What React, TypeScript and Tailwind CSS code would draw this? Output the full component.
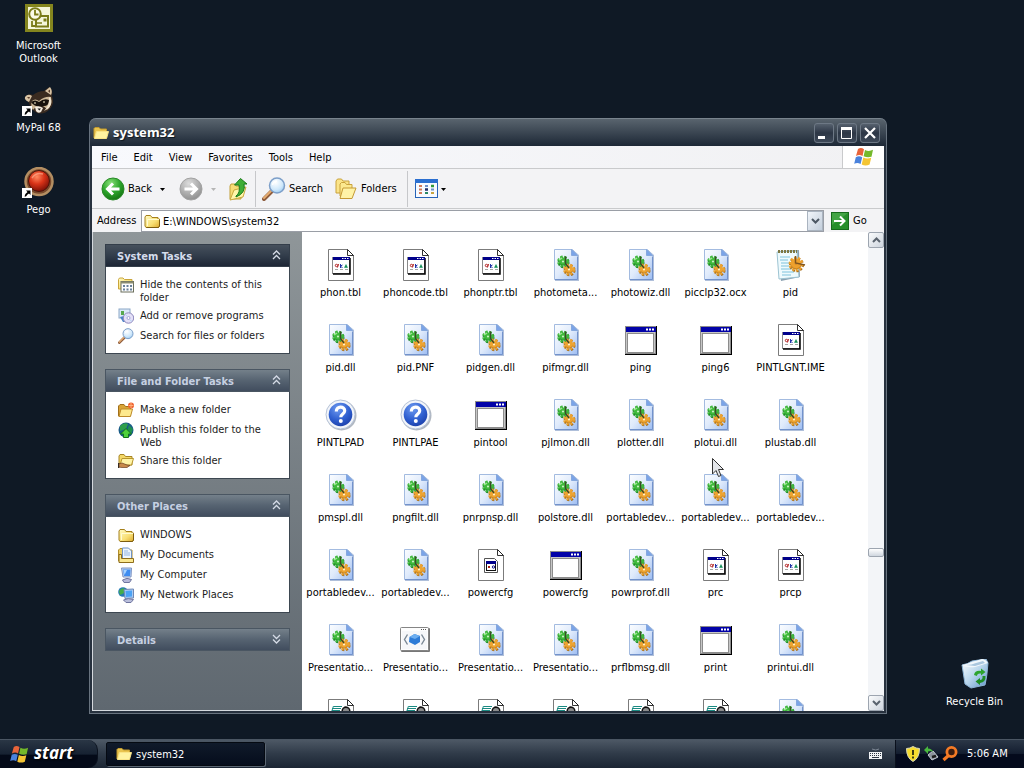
import React from "react";

type Kind = "tbl" | "dll" | "setup" | "window" | "help" | "cpl" | "xml" | "script";
type FileEntry = { name?: string; kind: Kind };

const files: FileEntry[] = [
  { name: "phon.tbl", kind: "tbl" },
  { name: "phoncode.tbl", kind: "tbl" },
  { name: "phonptr.tbl", kind: "tbl" },
  { name: "photometa...", kind: "dll" },
  { name: "photowiz.dll", kind: "dll" },
  { name: "picclp32.ocx", kind: "dll" },
  { name: "pid", kind: "setup" },
  { name: "pid.dll", kind: "dll" },
  { name: "pid.PNF", kind: "dll" },
  { name: "pidgen.dll", kind: "dll" },
  { name: "pifmgr.dll", kind: "dll" },
  { name: "ping", kind: "window" },
  { name: "ping6", kind: "window" },
  { name: "PINTLGNT.IME", kind: "tbl" },
  { name: "PINTLPAD", kind: "help" },
  { name: "PINTLPAE", kind: "help" },
  { name: "pintool", kind: "window" },
  { name: "pjlmon.dll", kind: "dll" },
  { name: "plotter.dll", kind: "dll" },
  { name: "plotui.dll", kind: "dll" },
  { name: "plustab.dll", kind: "dll" },
  { name: "pmspl.dll", kind: "dll" },
  { name: "pngfilt.dll", kind: "dll" },
  { name: "pnrpnsp.dll", kind: "dll" },
  { name: "polstore.dll", kind: "dll" },
  { name: "portabledev...", kind: "dll" },
  { name: "portabledev...", kind: "dll" },
  { name: "portabledev...", kind: "dll" },
  { name: "portabledev...", kind: "dll" },
  { name: "portabledev...", kind: "dll" },
  { name: "powercfg", kind: "cpl" },
  { name: "powercfg", kind: "window" },
  { name: "powrprof.dll", kind: "dll" },
  { name: "prc", kind: "tbl" },
  { name: "prcp", kind: "tbl" },
  { name: "Presentatio...", kind: "dll" },
  { name: "Presentatio...", kind: "xml" },
  { name: "Presentatio...", kind: "dll" },
  { name: "Presentatio...", kind: "dll" },
  { name: "prflbmsg.dll", kind: "dll" },
  { name: "print", kind: "window" },
  { name: "printui.dll", kind: "dll" },
  { kind: "script" },
  { kind: "script" },
  { kind: "script" },
  { kind: "script" },
  { kind: "script" },
  { kind: "script" },
  { kind: "dll" },
];

function Defs() {
  return (
    <svg width="0" height="0" className="absolute" aria-hidden="true">
      <defs>
        <linearGradient id="page" x1="0" y1="0" x2="1" y2="1">
          <stop offset="0" stopColor="#fbfdff" />
          <stop offset="0.5" stopColor="#dfeafb" />
          <stop offset="1" stopColor="#9dbdf2" />
        </linearGradient>
        <linearGradient id="folder" x1="0" y1="0" x2="1" y2="1">
          <stop offset="0" stopColor="#fffbc4" />
          <stop offset="0.6" stopColor="#f8df74" />
          <stop offset="1" stopColor="#dba92c" />
        </linearGradient>
        <radialGradient id="greenBall" cx="0.4" cy="0.25" r="0.8">
          <stop offset="0" stopColor="#8be07a" />
          <stop offset="0.5" stopColor="#2fa82d" />
          <stop offset="1" stopColor="#12700f" />
        </radialGradient>
        <radialGradient id="grayBall" cx="0.4" cy="0.25" r="0.8">
          <stop offset="0" stopColor="#dcdcdc" />
          <stop offset="0.6" stopColor="#ababab" />
          <stop offset="1" stopColor="#8c8c8c" />
        </radialGradient>
        <radialGradient id="blueBall" cx="0.4" cy="0.25" r="0.8">
          <stop offset="0" stopColor="#6f9bf0" />
          <stop offset="0.6" stopColor="#2f5fd0" />
          <stop offset="1" stopColor="#1c3fa8" />
        </radialGradient>
        <radialGradient id="redBall" cx="0.4" cy="0.3" r="0.7">
          <stop offset="0" stopColor="#ff8a60" />
          <stop offset="0.5" stopColor="#d93318" />
          <stop offset="1" stopColor="#7d1208" />
        </radialGradient>
        <radialGradient id="lens" cx="0.4" cy="0.3" r="0.8">
          <stop offset="0" stopColor="#ffffff" />
          <stop offset="0.6" stopColor="#cfe8fb" />
          <stop offset="1" stopColor="#8fc4ee" />
        </radialGradient>
        <linearGradient id="bin" x1="0" y1="0" x2="1" y2="1">
          <stop offset="0" stopColor="#ffffff" />
          <stop offset="0.5" stopColor="#b9d6ec" />
          <stop offset="1" stopColor="#5d93c8" />
        </linearGradient>
      </defs>
    </svg>
  );
}

function Gear({ x, y, r, fill, dark, hole }: { x: number; y: number; r: number; fill: string; dark: string; hole: string }) {
  return (
    <g>
      <circle cx={x + 0.6} cy={y + 0.8} r={r - 1.2} fill="none" stroke={dark} strokeWidth="2.400" strokeDasharray="2.2 1.600" />
      <circle cx={x} cy={y} r={r - 1.3} fill="none" stroke={fill} strokeWidth="2.400" strokeDasharray="2.200 1.600" />
      <circle cx={x} cy={y} r={r - 2} fill={fill} />
      <path d={`M${x - r + 2.5} ${y + 1.5}A${r - 2} ${r - 2} 0 0 0 ${x + r - 2.2} ${y + 1}`} fill="none" stroke={dark} strokeOpacity="0.6" />
      <circle cx={x} cy={y} r="1.100" fill={hole} />
    </g>
  );
}

function FileIcon({ kind }: { kind: Kind }) {
  let art: React.ReactNode = null;
  if (kind === "dll") {
    art = (
      <>
        <path d="M6 1H24L30 6V32H6Z" fill="#5f7fb5" fillOpacity="0.5" />
        <path d="M5.500 .5H23.500L28.500 5.500V30.500H5.500Z" fill="url(#page)" stroke="#a3bbe0" />
        <path d="M22.500 .5L28.500 6.500H22.500Z" fill="#7ba4e8" stroke="#86a8de" />
        <path d="M28.500 8V30.500H6" fill="none" stroke="#7292cc" />
        <Gear x={14} y={12.5} r={6} fill="#3fba3c" dark="#1b7d28" hole="#c9f0c2" />
        <Gear x={20} y={20.5} r={6} fill="#eea431" dark="#a8701e" hole="#fff0cc" />
        <path d="M16.500 7.500V14.500L20 19" stroke="#3b4a28" strokeWidth="1.400" fill="none" />
        <path d="M10 11L13 9" stroke="#9be88f" strokeWidth="1.500" />
      </>
    );
  } else if (kind === "tbl" || kind === "cpl" || kind === "script") {
    art = (
      <>
        <path d="M4.500 .5H23.500L29.500 6.500V31.500H4.500Z" fill="#fff" stroke="#7b7b7b" />
        <path d="M23.500 .5V6.500H29.500" fill="#fff" stroke="#333" />
        <path d="M23.500 .5L29.500 6.500" fill="none" stroke="#222" />
        {kind === "tbl" && (
          <>
            <rect x="8.500" y="8.500" width="17" height="16" fill="#fff" stroke="#8a8a8a" />
            <path d="M26 9V25H9" fill="none" stroke="#000" strokeWidth="1.500" />
            <rect x="9" y="8" width="17" height="3" fill="#00008b" />
            <path d="M18 9.500H25" stroke="#fff" strokeDasharray="1.500 1" />
            <circle cx="12.500" cy="16.500" r="1.200" fill="none" stroke="#b32020" />
            <path d="M13.500 18.500L14.500 15" stroke="#b32020" />
            <path d="M16.500 15V19M16.500 17L18.500 16M16.500 17L18.500 19" stroke="#2434a8" fill="none" />
            <path d="M20.500 18.500L22 15.500L23.500 18.500Z" stroke="#0f8c55" fill="#0f8c55" strokeWidth=".5" />
            <path d="M11 20.500H14M16 20.500H19M21 20.500H24" stroke="#a5a5a5" />
          </>
        )}
        {kind === "cpl" && (
          <>
            <path d="M10.500 9.500H20.500L23.500 12.500V23.500H10.500Z" fill="#fff" stroke="#555" />
            <rect x="12.500" y="13.500" width="9" height="8" fill="#fff" stroke="#111" />
            <rect x="12" y="12" width="10" height="3" fill="#00008b" />
            <path d="M14 17L16 19M16 17L14 19" stroke="#a21" />
            <circle cx="19.500" cy="18" r="1.200" fill="none" stroke="#118" />
          </>
        )}
        {kind === "script" && (
          <>
            <path d="M10 7.500H18M8 9.500H17M8 11.500H16" stroke="#1c8a82" />
            <path d="M9.500 7L7.500 13" stroke="#1c8a82" />
            <circle cx="22" cy="12" r="3.800" fill="#8d8d8d" stroke="#111" strokeWidth="1.500" />
            <path d="M16.500 13H19M25.500 13H28" stroke="#111" strokeWidth="1.500" />
            <path d="M21.500 7.500V9" stroke="#111" strokeWidth="2" />
          </>
        )}
      </>
    );
  } else if (kind === "window") {
    art = (
      <>
        <rect x="1" y="2" width="32" height="29" fill="#000" />
        <rect x="1" y="2" width="31" height="28" fill="#8c8c8c" />
        <rect x="2" y="3" width="29" height="26" fill="#c6c6c6" />
        <rect x="3.500" y="9.500" width="26" height="19" fill="#fff" stroke="#8c8c8c" />
        <rect x="2" y="3" width="30" height="5" fill="#0202a8" />
        <path d="M22 5.500H31" stroke="#fff" strokeWidth="2" strokeDasharray="2 1" />
      </>
    );
  } else if (kind === "help") {
    art = (
      <>
        <circle cx="17.500" cy="16.500" r="15" fill="#7b8798" fillOpacity="0.6" />
        <circle cx="16.500" cy="15.500" r="14.500" fill="#f2f5fa" stroke="#b5c2d6" />
        <circle cx="16.500" cy="15.500" r="11.800" fill="url(#blueBall)" />
        <path d="M12.300 12.500C12.300 6.800 20.700 6.800 20.700 11.800C20.700 15 16.800 15 16.800 18.200" fill="none" stroke="#fff" strokeWidth="3.200" />
        <circle cx="16.800" cy="22" r="2" fill="#fff" />
      </>
    );
  } else if (kind === "setup") {
    art = (
      <>
        <path d="M4 2L25 1L26 28L7 32Z" fill="#8aa0b0" />
        <path d="M3 3L23 2L25 28L5 30Z" fill="#eefafd" stroke="#9cc3d2" />
        <path d="M4 2.500H23" stroke="#7d7742" strokeWidth="3" strokeDasharray="2 1" />
        <path d="M6 8H16M6 11H14M7 14H15M7 17H15M7 20H17M8 23H20M8 26H17" stroke="#7fc2dc" />
        <Gear x={22} y={15} r={7.5} fill="#eea02c" dark="#a8701e" hole="#d98c28" />
        <path d="M21.500 7V14L31 16" stroke="#80551f" strokeWidth="1.500" fill="none" />
      </>
    );
  } else if (kind === "xml") {
    art = (
      <>
        <rect x="2" y="4" width="29" height="24" rx="1" fill="#777" />
        <rect x="1.500" y="3.500" width="28" height="23" rx="1" fill="#fdfdfd" stroke="#858585" />
        <rect x="3" y="7" width="25" height="18" fill="#f6f7f9" />
        <path d="M22 5.500H28" stroke="#555" strokeDasharray="1 1" />
        <path d="M8.500 10.500L5.500 15.500L8.500 20.500M22.500 10.500L25.500 15.500L22.500 20.500" fill="none" stroke="#7a8794" strokeWidth="1.400" />
        <path d="M10.500 13L15.500 10L21 12V18L16 21L10 18Z" fill="#2d7bd6" />
        <path d="M10.500 13L15.500 10L21 12L16 15Z" fill="#6caef0" />
      </>
    );
  }
  return (
    <svg width="33" height="32" viewBox="0 0 33 32" className="shrink-0" aria-hidden="true">
      {art}
    </svg>
  );
}

function Folder() {
  return (
    <svg width="16" height="16" viewBox="0 0 16 16" className="shrink-0" aria-hidden="true">
      <path d="M1 4L2 2.500H6.500L8 4.500H14V6H15.500V13L14.500 14.500H2L1 13Z" fill="url(#folder)" stroke="#a5801c" />
      <path d="M3.500 13V6.500H15" fill="none" stroke="#fffbd0" />
      <path d="M2.500 14.500H14.500L15.500 13V7" fill="none" stroke="#7d5d10" />
    </svg>
  );
}

function OpenFolder() {
  return (
    <svg width="16" height="16" viewBox="0 0 16 16" className="shrink-0" aria-hidden="true">
      <path d="M1 13V3.500L2 2.500H6L7.500 4H13.500V13Z" fill="#e9c44e" stroke="#c29a2c" />
      <path d="M3.500 6.500H15.500L13.500 13.500H1.500Z" fill="#fff3a0" stroke="#f9e487" />
    </svg>
  );
}

function Flag({ size }: { size: number }) {
  return (
    <svg width={size} height={size} viewBox="0 0 20 20" className="shrink-0" aria-hidden="true">
      <path d="M4 2Q7 0 10 2.200L8.500 9Q5.500 7 2 9Z" fill="#e8643a" />
      <path d="M11 3Q15 5 19 2.800L17.500 9.800Q13.500 11 9.600 9.200Z" fill="#74b92b" />
      <path d="M1.800 10.200Q5 8.500 8.200 10.200L6.600 17Q3.500 15 .2 16.800Z" fill="#4a82dc" />
      <path d="M9.300 10.500Q13 12.500 17.200 10.800L15.600 17.500Q11.500 19.500 7.700 17.500Z" fill="#f4c534" />
    </svg>
  );
}

function Magnifier({ size }: { size: number }) {
  return (
    <svg width={size} height={size} viewBox="0 0 24 24" className="shrink-0" aria-hidden="true">
      <path d="M2 22L10 14" stroke="#8d5b3c" strokeWidth="4" strokeLinecap="round" />
      <path d="M2 21L9 14" stroke="#e4ac72" strokeWidth="2" strokeLinecap="round" />
      <circle cx="15" cy="8.500" r="7.500" fill="url(#lens)" stroke="#7d9fc9" strokeWidth="1.500" />
      <path d="M10.500 8A5 5 0 0 1 15 4" stroke="#fff" strokeWidth="1.500" fill="none" />
    </svg>
  );
}

type TaskArt = "hide" | "programs" | "search" | "new" | "web" | "share" | "folder" | "docs" | "computer" | "network";

function TaskIcon({ art }: { art: TaskArt }) {
  if (art === "folder") return <Folder />;
  if (art === "search") return <Magnifier size={16} />;
  return (
    <svg width="16" height="16" viewBox="0 0 16 16" className="shrink-0" aria-hidden="true">
      {art === "hide" && (
        <>
          <path d="M.5 2.500L1.500 1H5L6.500 2.500H14V12H.5Z" fill="url(#folder)" stroke="#c9a53c" />
          <rect x="3" y="4.500" width="12.500" height="10.500" fill="#fdfdfd" stroke="#6b6f5c" />
          <path d="M3 5.500H15.500" stroke="#8a8c70" strokeWidth="2" />
          <path d="M5 9H14M5 12.500H14" stroke="#67809b" strokeWidth="2" strokeDasharray="2 1.500" />
        </>
      )}
      {art === "programs" && (
        <>
          <rect x="1" y="1" width="11" height="9" fill="#dbe9f7" stroke="#8ca7c7" />
          <path d="M3 3H6V7H3Z" fill="#58a84e" />
          <path d="M2 9L5 14H9L6 8Z" fill="#4b82c8" />
          <circle cx="10.500" cy="10" r="5.200" fill="#e4e0f8" stroke="#8f89bd" />
          <circle cx="10.500" cy="10" r="1.500" fill="#fff" stroke="#a7a2d6" />
          <path d="M7.500 6.500L9.500 8.500M11.500 11.500L14 13.500" stroke="#b6d6f5" />
        </>
      )}
      {art === "new" && (
        <>
          <path d="M.5 14V4L2 2.500H6L7.500 4.500H12.500V14Z" fill="#d9a437" stroke="#a06f1b" />
          <path d="M3 7H14.500L12.500 14.500H1Z" fill="#fde98d" stroke="#bd8a2a" />
          <circle cx="13" cy="3.500" r="3" fill="#ef6233" />
          <path d="M13 1V6M10.500 3.500H15.500" stroke="#ffb17a" />
        </>
      )}
      {art === "web" && (
        <>
          <circle cx="8" cy="8" r="7.500" fill="#1a5c88" />
          <path d="M2 4Q6 0 10 2L8 7L2 9Z" fill="#2f9f4b" />
          <path d="M11 3L15 7L13 12L9 9Z" fill="#1f9050" />
          <path d="M8 6.500L13.500 12H10.500V15.500H5.500V12H2.500Z" fill="#4fd03a" stroke="#11731c" />
        </>
      )}
      {art === "share" && (
        <>
          <path d="M1 12V3L2 1.500H6L7.500 3.500H14V12Z" fill="#f4d868" stroke="#a88524" />
          <path d="M4 5.500H15.500L13.500 12H2Z" fill="#fff4a8" stroke="#b8962f" />
          <path d="M0 11L4 10L9 12L12 12.500L9 14.500H4L0 14Z" fill="#c98a4c" stroke="#6b3f1f" strokeWidth=".7" />
          <path d="M0 10V15" stroke="#3a2c20" strokeWidth="2.500" />
        </>
      )}
      {art === "docs" && (
        <>
          <path d="M.5 14V3L2 1.500H5L6 3H14V14Z" fill="#eccf64" stroke="#b18e2c" />
          <path d="M4.500 1H10.500L13.500 4V12H4.500Z" fill="#eef6ff" stroke="#6f93c4" />
          <path d="M6 4H10M6 6H12M6 8H12" stroke="#93b5e2" />
          <path d="M1 7.500H3.500V11.500H15.500V15.500H1Z" fill="#fbe890" stroke="#8f6e1c" />
        </>
      )}
      {art === "computer" && (
        <>
          <path d="M3.500 1L13.500 1L13 10H5Z" fill="#bcd2f2" stroke="#7e94c2" />
          <path d="M5 2.500L12.500 2.500L12 9H6Z" fill="#3e8cf0" />
          <path d="M5.500 3H9L6.500 8Z" fill="#a7d3ff" />
          <path d="M4.500 13Q9 10 13.500 12.500L11.500 15.500H6Z" fill="#b5b8d8" stroke="#6f759f" />
        </>
      )}
      {art === "network" && (
        <>
          <circle cx="5" cy="5" r="4.800" fill="#267ab5" />
          <path d="M1 4Q4 0 7 2L6 6L2 8Z" fill="#43ae4a" />
          <path d="M6 2.500L15.500 2V11L7 11.500Z" fill="#a9caf5" stroke="#7089b5" />
          <path d="M7.500 4L14 3.500V9.500L8 10Z" fill="#4ba3f5" />
          <path d="M5.500 13Q10 10.500 15.500 12.500L13 15.500H8Z" fill="#b9bedb" stroke="#6f759f" />
        </>
      )}
    </svg>
  );
}

type PanelProps = {
  title: string;
  tone?: "dark" | "light";
  items?: { art: TaskArt; text: string }[];
};

function Panel({ title, tone = "light", items }: PanelProps) {
  const head =
    tone === "dark"
      ? "from-[#46505c] via-[#323d4b] to-[#1d2635] text-[#d5dcec] border-[#343e4a]"
      : "from-[#74808a] via-[#566371] to-[#414d5e] text-[#c6d0e2] border-[#4a5662]";
  return (
    <section>
      <h2>
        <button
          type="button"
          aria-expanded={!!items}
          className={"flex h-[23px] w-full items-center justify-between border bg-linear-to-b pt-[2px] pr-2 pl-[11px] text-left text-[11px] font-bold " + head}
        >
          {title}
          <svg width="9" height="10" viewBox="0 0 9 10" className="mb-[3px]" aria-hidden="true">
            <path
              d={items ? "M1 4.500L4.500 1L8 4.500M1 9L4.500 5.500L8 9" : "M1 1L4.500 4.500L8 1M1 5.500L4.500 9L8 5.500"}
              fill="none"
              stroke="#d5dbe6"
              strokeWidth="1.300"
            />
          </svg>
        </button>
      </h2>
      {items && (
        <ul className="flex flex-col gap-1 border border-t-0 border-[#3d4751] bg-white pt-[10px] pr-5 pb-[9px] pl-3 text-[#1c1c1c]">
          {items.map((item) => (
            <li key={item.text}>
              <a href="#" className="flex gap-[6px]">
                <TaskIcon art={item.art} />
                <span className="pt-px leading-[13px]">{item.text}</span>
              </a>
            </li>
          ))}
        </ul>
      )}
    </section>
  );
}

const captionButton =
  "flex h-5 w-5 items-center justify-center rounded-[3px] border border-[#6d7885] bg-linear-to-b from-[#56616e] via-[#2c3645] to-[#3e4958]";

function TitleBar() {
  return (
    <header className="flex h-7 shrink-0 items-center rounded-t-[6px] border-t border-[#78838d] bg-linear-to-b from-[#59646e] via-[#3b4652] to-[#1d2836] pr-[6px] pl-[3px]">
      <OpenFolder />
      <h1 className="ml-1 flex-1 pb-px text-[13px] leading-4 font-bold text-white [font-family:'Noto_Sans','Open_Sans',sans-serif] [text-shadow:1px_1px_1px_#101820]">
        system32
      </h1>
      <div className="flex gap-[3px]">
        <button type="button" aria-label="Minimize" className={captionButton}>
          <svg width="16" height="16" viewBox="0 0 16 16">
            <path d="M2 12.500H9" stroke="#fff" strokeWidth="3" />
          </svg>
        </button>
        <button type="button" aria-label="Maximize" className={captionButton}>
          <svg width="16" height="16" viewBox="0 0 16 16">
            <path d="M2.500 3V13.500H12.500V3" fill="none" stroke="#fff" />
            <path d="M2 3.500H13" stroke="#fff" strokeWidth="3" />
          </svg>
        </button>
        <button type="button" aria-label="Close" className={captionButton}>
          <svg width="16" height="16" viewBox="0 0 16 16">
            <path d="M3 3L13 13M13 3L3 13" stroke="#fff" strokeWidth="2.200" />
          </svg>
        </button>
      </div>
    </header>
  );
}

function Caret({ color = "#000" }: { color?: string }) {
  return (
    <svg width="5" height="3" viewBox="0 0 5 3" className="shrink-0" aria-hidden="true">
      <path d="M0 0H5L2.500 3Z" fill={color} />
    </svg>
  );
}

function Toolbar() {
  return (
    <div className="flex h-10 shrink-0 items-center border-b border-[#c9cacc] bg-[#f3f3f5] pt-px pl-[9px]">
      <button type="button" className="flex items-center gap-[3px]">
        <svg width="24" height="24" viewBox="0 0 24 24" aria-hidden="true">
          <circle cx="12" cy="12" r="11" fill="url(#greenBall)" stroke="#2b8a28" />
          <path d="M18.500 12H7M12 6.500L6.500 12L12 17.500" fill="none" stroke="#fff" strokeWidth="3" />
        </svg>
        Back
      </button>
      <button type="button" aria-label="Back history" className="ml-2 flex h-6 items-center">
        <Caret />
      </button>
      <button type="button" aria-label="Forward" className="ml-[14px]">
        <svg width="24" height="24" viewBox="0 0 24 24" aria-hidden="true">
          <circle cx="12" cy="12" r="11" fill="url(#grayBall)" stroke="#a2a2a2" />
          <path d="M5.500 12H17M12 6.500L17.500 12L12 17.500" fill="none" stroke="#fff" strokeWidth="3" />
        </svg>
      </button>
      <button type="button" aria-label="Forward history" className="ml-2 flex h-6 items-center">
        <Caret color="#b5b5b5" />
      </button>
      <button type="button" aria-label="Up" className="ml-3">
        <svg width="22" height="24" viewBox="0 0 22 24" aria-hidden="true">
          <path d="M2 22V9L3 7H7L8 9H13V22Z" fill="#f6dc75" stroke="#c19f38" />
          <path d="M6 13L18 10L15 20L2 23Z" fill="#fff6aa" stroke="#c9a83e" />
          <path d="M8 19Q12.500 16 11 8H6.500L12.500 1.500L19 7H16Q18 16 8 20Z" fill="#3fae36" stroke="#1b7a1b" />
        </svg>
      </button>
      <div className="ml-[5px] h-9 w-px bg-[#c6c7ca]" />
      <button type="button" className="ml-[6px] flex items-center gap-[3px]">
        <Magnifier size={24} />
        Search
      </button>
      <button type="button" className="ml-3 flex items-center gap-1">
        <svg width="22" height="22" viewBox="0 0 22 22" aria-hidden="true">
          <path d="M1 15V3L2.500 1H6.500L8 3H14V15Z" fill="#fbe488" stroke="#c9a23c" />
          <path d="M5 18V6L6.500 4.500H10L11.500 6.500H17V18Z" fill="#fce98f" stroke="#c9a23c" />
          <path d="M8 10H21L17 20.500H5Z" fill="#fff3a6" stroke="#c59a34" />
        </svg>
        Folders
      </button>
      <div className="ml-[10px] h-9 w-px bg-[#c6c7ca]" />
      <button type="button" aria-label="Views" className="ml-[7px] flex items-center gap-[2px]">
        <svg width="24" height="20" viewBox="0 0 24 20" aria-hidden="true">
          <rect x=".5" y=".5" width="22" height="18" fill="#f7faff" stroke="#2763b8" />
          <rect x="0" y="0" width="23" height="4" fill="#2b6fd0" />
          <path d="M4 7H7M4 10.500H7M4 14H7" stroke="#d07a5a" strokeWidth="2" />
          <path d="M10 7H13M16 10.500H19" stroke="#6d8fc8" strokeWidth="2" />
          <path d="M16 7H19" stroke="#2f9a3c" strokeWidth="2.500" />
          <path d="M10 10.500H13" stroke="#20306a" strokeWidth="2.500" />
          <path d="M10 14H13" stroke="#2a8a66" strokeWidth="2" />
          <path d="M16 14H19" stroke="#c9a440" strokeWidth="2" />
        </svg>
        <Caret />
      </button>
    </div>
  );
}

function AddressBar() {
  return (
    <div className="flex h-[23px] shrink-0 items-center bg-[#f3f3f5] pt-px pl-[5px]">
      <label htmlFor="address" className="w-11">
        Address
      </label>
      <div className="flex h-[22px] min-w-0 flex-1 items-center border border-[#9a9ea6] bg-white pl-[2px]">
        <Folder />
        <input id="address" defaultValue="E:\WINDOWS\system32" className="ml-[3px] min-w-0 flex-1 bg-transparent pt-px outline-none" />
        <button type="button" aria-label="Address list" className="flex h-5 w-4 items-center justify-center border border-[#aab4c0] bg-linear-to-br from-[#f1f5fa] to-[#c3cedb]">
          <svg width="9" height="7" viewBox="0 0 9 7">
            <path d="M1 1L4.500 4.500L8 1" fill="none" stroke="#4c5763" strokeWidth="2" />
          </svg>
        </button>
      </div>
      <button type="button" className="flex w-[60px] items-center gap-1 pl-[7px]">
        <svg width="18" height="18" viewBox="0 0 18 18" aria-hidden="true">
          <rect x=".5" y=".5" width="17" height="17" fill="#278f2b" stroke="#176b1c" />
          <path d="M1 1H17L1 13Z" fill="#57b457" fillOpacity="0.6" />
          <path d="M3 9H13M9 4.500L13.500 9L9 13.500" fill="none" stroke="#fff" strokeWidth="2" />
        </svg>
        Go
      </button>
    </div>
  );
}

function ScrollBar() {
  const btn = "flex h-4 w-4 items-center justify-center rounded-[2px] border border-[#9da5b0] bg-linear-to-br from-[#fbfcfd] to-[#cdd4dd]";
  return (
    <div className="flex w-4 shrink-0 flex-col bg-[#f3f5f8]">
      <button type="button" aria-label="Scroll up" className={btn}>
        <svg width="9" height="6" viewBox="0 0 9 6">
          <path d="M1 5L4.500 1.500L8 5" fill="none" stroke="#5a636e" strokeWidth="2" />
        </svg>
      </button>
      <div className="flex flex-1 flex-col">
        <div className="grow-[301]" />
        <div className="h-[9px] rounded-[2px] border border-[#9da5b0] bg-linear-to-b from-white to-[#cfd6df]" />
        <div className="grow-[138]" />
      </div>
      <button type="button" aria-label="Scroll down" className={btn}>
        <svg width="9" height="6" viewBox="0 0 9 6">
          <path d="M1 1L4.500 4.500L8 1" fill="none" stroke="#5a636e" strokeWidth="2" />
        </svg>
      </button>
    </div>
  );
}

function ExplorerWindow() {
  return (
    <main className="absolute top-[118px] right-[137px] bottom-[25px] left-[89px] flex flex-col rounded-t-[7px] border-x border-b border-[#68737f] bg-[#27313e]">
      <TitleBar />
      <div className="mx-[2px] mb-[2px] flex min-h-0 flex-1 flex-col bg-white">
        <div className="flex h-[23px] shrink-0 items-stretch justify-between border-b border-[#c9cacc] bg-linear-to-r from-[#f8f9fd] to-[#f1f1f3]">
          <nav className="flex items-center pt-px pl-[1px]">
            {["File", "Edit", "View", "Favorites", "Tools", "Help"].map((name) => (
              <button key={name} type="button" className="px-2">
                {name}
              </button>
            ))}
          </nav>
          <div className="flex w-[42px] items-center justify-center border-l border-[#c9cacc] bg-white">
            <Flag size={20} />
          </div>
        </div>
        <Toolbar />
        <AddressBar />
        <div className="flex min-h-0 flex-1">
          <aside className="flex w-[210px] shrink-0 flex-col gap-[15px] overflow-hidden border-b border-l border-[#d5d9de] bg-linear-to-b from-[#8f9699] to-[#5f6870] px-3 pt-3">
            <Panel
              title="System Tasks"
              tone="dark"
              items={[
                { art: "hide", text: "Hide the contents of this folder" },
                { art: "programs", text: "Add or remove programs" },
                { art: "search", text: "Search for files or folders" },
              ]}
            />
            <Panel
              title="File and Folder Tasks"
              items={[
                { art: "new", text: "Make a new folder" },
                { art: "web", text: "Publish this folder to the Web" },
                { art: "share", text: "Share this folder" },
              ]}
            />
            <Panel
              title="Other Places"
              items={[
                { art: "folder", text: "WINDOWS" },
                { art: "docs", text: "My Documents" },
                { art: "computer", text: "My Computer" },
                { art: "network", text: "My Network Places" },
              ]}
            />
            <Panel title="Details" />
          </aside>
          <ul className="grid min-w-0 flex-1 auto-rows-[75px] grid-cols-[repeat(auto-fill,75px)] overflow-hidden pt-[17px] pl-px">
            {files.map((file, i) => (
              <li key={i} className="flex flex-col items-center gap-[5px] whitespace-nowrap">
                <FileIcon kind={file.kind} />
                {file.name && <span className="leading-[14px]">{file.name}</span>}
              </li>
            ))}
          </ul>
          <ScrollBar />
        </div>
      </div>
    </main>
  );
}

function Shortcut() {
  return (
    <g transform="translate(0 -1)">
      <rect x="0" y="22" width="10" height="10" fill="#fff" />
      <path d="M2.500 30.500Q2.500 28 5.500 26L4 24.500H8.500V29L7 27.500Q5 28.500 4 30.500Z" fill="#000" />
    </g>
  );
}

function DesktopIcon({ label, place, children }: { label: string; place: string; children: React.ReactNode }) {
  return (
    <a href="#" className={"absolute flex w-[75px] flex-col items-center gap-1 text-center leading-[13px] text-white " + place}>
      <svg width="33" height="32" viewBox="0 0 33 32" aria-hidden="true">
        {children}
      </svg>
      <span className="px-2">{label}</span>
    </a>
  );
}

function Desktop() {
  return (
    <>
      <DesktopIcon label="Microsoft Outlook" place="top-[3px] left-[1px]">
        <rect x="3" y="1" width="28" height="28" fill="#84851e" />
        <rect x="6" y="4" width="22" height="22" fill="#f5f6da" />
        <rect x="14" y="13" width="12" height="10.500" fill="#f5f6da" stroke="#7a7b18" strokeWidth="2" />
        <path d="M15 20H20" stroke="#7a7b18" strokeWidth="1.500" />
        <rect x="21.500" y="15.500" width="3" height="3" fill="#7a7b18" />
        <circle cx="13" cy="11" r="5.800" fill="#fbfbe8" stroke="#7a7b18" strokeWidth="2" />
        <path d="M13 7V11.500H16.500" stroke="#7a7b18" strokeWidth="1.800" fill="none" />
        <path d="M10 18V23H15" stroke="#7a7b18" strokeWidth="1.800" fill="none" />
      </DesktopIcon>
      <DesktopIcon label="MyPal 68" place="top-[85px] left-[1px]">
        <path d="M3 12Q6 8 11 10Q16 6 22 6L27 2Q31 4 30 11Q33 18 28 24Q22 30 15 28Q8 24 7 18Z" fill="#3a2b20" />
        <path d="M3 12Q6 8 10 11L7 17Q2 15 3 12ZM23 6L28 2Q31 6 29 10Z" fill="#d8c3a4" />
        <path d="M5 12L8 12L7 14ZM26 6L28 4.500L28 8Z" fill="#5b3e2b" />
        <path d="M10 16Q13 13 17 16Q23 11 29 12Q31 20 25 25Q22 20 17 21Q12 23 11 25Q8 21 10 16Z" fill="#cdb898" />
        <path d="M9 17Q13 14 17 17Q22 13 27 15Q27 21 22 21Q13 23 9 17Z" fill="#17110d" />
        <path d="M28 12Q31 18 27 23L22 26Q28 20 27 13Z" fill="#efe3cf" />
        <circle cx="13" cy="18" r="1" fill="#b0a78f" />
        <circle cx="22" cy="17" r="1" fill="#b0a78f" />
        <path d="M13 22Q17 20 21 23L19 27Q16 29 14 26Z" fill="#f5ede1" />
        <path d="M15.500 23.500H19L17.300 25.500Z" fill="#161616" />
        <Shortcut />
      </DesktopIcon>
      <DesktopIcon label="Pego" place="top-[167px] left-[1px]">
        <circle cx="17" cy="14.500" r="13.500" fill="#7a4a2c" stroke="#b38e62" strokeWidth="2.500" />
        <circle cx="17" cy="14" r="10.500" fill="url(#redBall)" stroke="#4c1409" />
        <path d="M10 11Q14 5 21 7" stroke="#ffb59a" strokeOpacity="0.6" fill="none" strokeWidth="1.500" />
        <Shortcut />
      </DesktopIcon>
      <DesktopIcon label="Recycle Bin" place="right-[12px] bottom-[31px]">
        <path d="M4 6Q10 5 14 2L28 0L30 4Q29 18 27 26L13 29L7 25Z" fill="url(#bin)" stroke="#8db4d6" />
        <path d="M4 6Q8 9 17 8L30 4Q27 0 24 0L14 3Q9 5 4 6Z" fill="#f1f7fc" />
        <path d="M8 6Q14 6 18 4L25 2L27 4L17 7Z" fill="#a9c6de" />
        <path d="M16 16Q17 11 23 12V9.500L27.500 13L23 16.500V14.500Q19 14 19 17Z" fill="#2da42d" />
        <path d="M27.500 17Q28 23 22 24V26L17.500 22.500L22 19V21Q25 21 24.500 17Z" fill="#1e8c24" />
      </DesktopIcon>
    </>
  );
}

function Taskbar() {
  return (
    <footer className="flex h-[29px] shrink-0 items-stretch border-t border-[#4b5663] bg-linear-to-b from-[#4d5865] via-[#2f3a48] to-[#1b2533] text-white">
      <button
        type="button"
        className="flex w-[98px] items-center gap-[5px] rounded-r-[10px] border-r border-[#0a111e] bg-linear-to-b from-[#2a3645] from-0% via-[#172232] via-50% to-[#040a18] to-55% pl-[10px] text-[17px] leading-none font-bold italic [font-family:'Open_Sans','Noto_Sans',sans-serif] [text-shadow:1px_1px_2px_#000]"
      >
        <Flag size={19} />
        <span className="pb-[3px]">start</span>
      </button>
      <button
        type="button"
        className="my-[2px] ml-2 flex w-[159px] items-center gap-1 rounded-[2px] border border-[#050a12] bg-linear-to-b from-[#101a2a] to-[#060d1c] pl-[9px] text-left shadow-[1px_1px_0_#5b6673]"
      >
        <OpenFolder />
        <span className="pt-px">system32</span>
      </button>
      <div className="flex flex-1 items-center justify-end pr-3">
        <svg width="14" height="12" viewBox="0 0 14 12" role="img" aria-label="Keyboard">
          <path d="M3 1Q7 3 10 1" stroke="#7d8794" fill="none" />
          <rect x="0" y="4" width="13" height="7" fill="#f1f3f5" />
          <path d="M1 5.500H12M1 7.500H12" stroke="#2c3643" strokeDasharray="1 1" />
          <path d="M3 9.500H10" stroke="#2c3643" />
        </svg>
      </div>
      <div className="flex w-[129px] items-center border-l border-[#0a101c] bg-linear-to-b from-[#2b3747] from-0% via-[#141e30] via-48% to-[#040a1c] to-52% pl-[10px]">
        <svg width="14" height="16" viewBox="0 0 14 16" role="img" aria-label="Security alert">
          <path d="M7 .5Q10 2.500 13.500 2.500Q13.500 12 7 15.500Q.5 12 .5 2.500Q4 2.500 7 .5Z" fill="#f6dc2e" stroke="#d8d8b8" />
          <path d="M7 4V9M7 10.500V12.500" stroke="#2b2b10" strokeWidth="1.800" />
        </svg>
        <svg width="16" height="16" viewBox="0 0 16 16" className="ml-1" role="img" aria-label="Safely remove hardware">
          <path d="M4 9L9 5L14 11L8 14Z" fill="#8b939c" stroke="#c4cad2" />
          <path d="M8 11L12 10" stroke="#1a1a1a" strokeWidth="2.500" />
          <path d="M0 4L4 0V2.500Q8 2.500 9 6Q7 4.500 4 5.500V8Z" fill="#49b83f" />
        </svg>
        <svg width="17" height="16" viewBox="0 0 17 16" className="ml-[2px]" role="img" aria-label="Search tool">
          <circle cx="9.500" cy="6" r="4.600" fill="#3c1d10" stroke="#f47a25" strokeWidth="2.800" />
          <path d="M6.500 9.500L1.500 14" stroke="#f47a25" strokeWidth="3.200" />
        </svg>
        <time className="ml-2 whitespace-nowrap">5:06 AM</time>
      </div>
    </footer>
  );
}

export default function App() {
  return (
    <div className="flex h-screen flex-col overflow-hidden bg-[#0f1925] text-[11px] leading-[14px] text-black [font-family:'DejaVu_Sans_Condensed','DejaVu_Sans',sans-serif]">
      <Defs />
      <div className="relative min-h-0 flex-1">
        <Desktop />
        <ExplorerWindow />
        <svg width="12" height="20" viewBox="0 0 12 20" className="absolute top-[458px] left-[712px]" aria-hidden="true">
          <path d="M.5 .5V16L4 12.500L6.500 18.500L9 17.500L6.500 11.500H11.500Z" fill="#e4e6ea" stroke="#333" />
        </svg>
      </div>
      <Taskbar />
    </div>
  );
}
